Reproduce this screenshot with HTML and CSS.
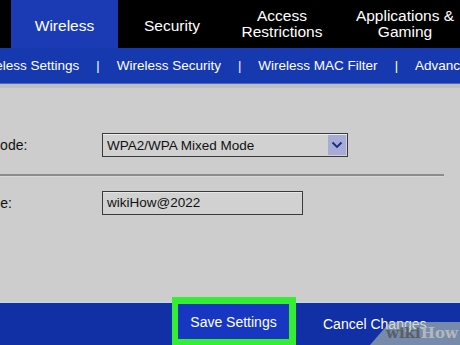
FILE: index.html
```html
<!DOCTYPE html>
<html lang="en">
<head>
    <meta charset="UTF-8">
    <meta name="viewport" content="width=device-width, initial-scale=1.0">
    <title>Wireless Security</title>
    <link rel="stylesheet" href="styles.css">
</head>
<body>
    <div class="page">
        <div class="tabs">
            <div class="tab tab-spacer"></div>
            <div class="tab tab-active">Wireless</div>
            <div class="tab tab-security">Security</div>
            <div class="tab tab-access">Access<br>Restrictions</div>
            <div class="tab tab-apps">Applications &amp;<br>Gaming</div>
        </div>

        <div class="subnav">
            <div class="subnav-items">
                <span>Wireless Settings</span>
                <span class="pipe">|</span>
                <span>Wireless Security</span>
                <span class="pipe">|</span>
                <span>Wireless MAC Filter</span>
                <span class="pipe">|</span>
                <span>Advanced Wireless Settings</span>
            </div>
        </div>

        <div class="content">
            <div class="form-row row-mode">
                <label class="form-label">Security Mode:</label>
                <div class="select-box">
                    <span class="select-value">WPA2/WPA Mixed Mode</span>
                    <span class="select-arrow">
                        <svg width="12" height="8" viewBox="0 0 12 8">
                            <path d="M1.5 1.5 L6 6 L10.5 1.5" fill="none" stroke="#1c2a80" stroke-width="1.8"/>
                        </svg>
                    </span>
                </div>
            </div>

            <div class="divider"></div>

            <div class="form-row">
                <label class="form-label">Passphrase:</label>
                <div class="text-input">wikiHow@2022</div>
            </div>
        </div>

        <div class="footer">
            <div class="save-button">Save Settings</div>
            <div class="cancel-link">Cancel Changes</div>
            <div class="watermark">
                <span class="wm-wiki">wiki</span><span class="wm-how">How</span>
            </div>
        </div>
    </div>
</body>
</html>
```

FILE: styles.css
```css
body {
    font-family: "Liberation Sans", Arial, sans-serif;
    margin: 0;
    padding: 0;
    background-color: #cdcdcd;
}

.page {
    width: 460px;
    height: 345px;
    overflow: hidden;
    position: relative;
}

/* top tab bar */
.tabs {
    display: flex;
    height: 48px;
    background-color: #000;
    white-space: nowrap;
}

.tab {
    display: flex;
    align-items: center;
    justify-content: center;
    flex-shrink: 0;
    color: #fff;
    font-size: 15.5px;
    line-height: 16px;
    text-align: center;
}

.tab-spacer {
    width: 11px;
}

.tab-active {
    width: 107px;
    background-color: #1a3bb3;
    padding-top: 4px;
    box-sizing: border-box;
}

.tab-security {
    width: 108px;
    padding-top: 4px;
    box-sizing: border-box;
}

.tab-access {
    width: 112px;
}

.tab-apps {
    width: 134px;
}

/* sub navigation */
.subnav {
    height: 35px;
    background-color: #1739b0;
    border-bottom: 1px solid #4a66c8;
    overflow: hidden;
}

.subnav-items {
    display: flex;
    align-items: center;
    height: 100%;
    margin-left: -25px;
    gap: 17px;
    color: #fff;
    font-size: 13.5px;
    white-space: nowrap;
}

.subnav-items .pipe {
    font-size: 13px;
}

/* form area */
.content {
    height: 218px;
    box-sizing: border-box;
    border-top: 4px solid #bfbfbf;
    padding-top: 45px;
    padding-right: 16px;
    color: #111;
    font-size: 14px;
}

.form-row {
    display: flex;
    align-items: center;
    margin-left: -66px;
    height: 24px;
}

.form-label {
    width: 168px;
    flex-shrink: 0;
}

.select-box {
    display: flex;
    align-items: center;
    justify-content: space-between;
    width: 246px;
    height: 24px;
    box-sizing: border-box;
    border: 1px solid #3a3a3a;
    box-shadow: inset 0 1px 0 #ececec;
    padding: 1px 1px 1px 4px;
    background-color: #d1d1d1;
    font-size: 13.5px;
}

.select-arrow {
    display: flex;
    align-items: center;
    justify-content: center;
    width: 18px;
    height: 20px;
    background-color: #a6acd6;
}

.divider {
    height: 2px;
    background-color: #8c8c8c;
    margin: 17px 0 14px 0;
    border-bottom: 1px solid #d8d8d8;
}

.text-input {
    width: 201px;
    height: 24px;
    box-sizing: border-box;
    border: 1px solid #3a3a3a;
    box-shadow: inset 0 1px 0 #e6e6e6;
    padding: 3px 4px;
    background-color: #d1d1d1;
    font-size: 13.5px;
}

/* bottom action bar */
.footer {
    display: flex;
    align-items: flex-start;
    height: 42px;
    border-top: 1px solid #c4daf4;
    background-color: #1230a5;
    padding-left: 172px;
    color: #fff;
    font-size: 14px;
}

.save-button {
    width: 124px;
    height: 48px;
    box-sizing: border-box;
    margin-top: -6px;
    border: 6px solid #33ee33;
    border-top-width: 7px;
    border-right-width: 7px;
    background-color: #1737c2;
    display: flex;
    align-items: center;
    justify-content: center;
    padding-top: 1px;
    flex-shrink: 0;
}

.cancel-link {
    margin-left: 27px;
    margin-top: 13px;
    white-space: nowrap;
}

.watermark {
    position: absolute;
    right: 0;
    bottom: 0;
    width: 90px;
    height: 23px;
    background-color: rgba(180, 195, 175, 0.62);
    clip-path: polygon(20px 0, 100% 0, 100% 100%, 0 100%);
    font-family: "DejaVu Serif", "Liberation Serif", serif;
    font-weight: bold;
    font-size: 15px;
    line-height: 23px;
    padding-left: 16px;
    box-sizing: border-box;
}

.wm-wiki {
    color: #5a5f66;
}

.wm-how {
    color: #b4b8bc;
}
```
